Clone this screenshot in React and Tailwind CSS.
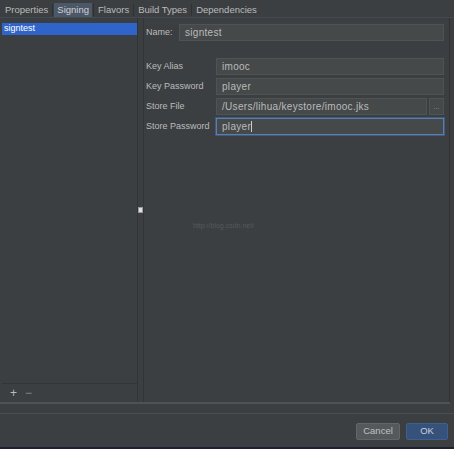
import { useState } from 'react';

const tabs = ['Properties', 'Signing', 'Flavors', 'Build Types', 'Dependencies'];

function Field({ label, value, focused, browse, labelWidth = 'w-[70px]' }) {
    return (
        <div className="flex items-center h-[17px]">
            <span className={`${labelWidth} shrink-0 text-[#bbbbbb]`}>{label}</span>
            <div
                className={`flex-1 h-full flex items-center px-[5px] bg-[#45494a] ${
                    focused ? 'border border-[#5a7fae] shadow-[0_0_0_1px_#3f5b80]' : 'border border-[#4f5354]'
                }`}
            >
                <span className="text-[#bbbbbb] text-[10px] tracking-[0.3px]">{value}</span>
                {focused && <span className="w-px h-[11px] bg-[#cccccc]" />}
            </div>
            {browse && (
                <div className="ml-[2px] w-[15px] h-full flex items-center justify-center bg-[#45494a] border border-[#4f5354] text-[#999999] text-[7px] leading-none">
                    ...
                </div>
            )}
        </div>
    );
}

export default function App() {
    const [active] = useState('Signing');

    return (
        <div
            className="w-[454px] h-[449px] bg-[#3c3f41] flex flex-col text-[9px] overflow-hidden"
            style={{ fontFamily: '"Liberation Sans", Arial, sans-serif' }}
        >
            {/* tab strip */}
            <div className="h-[18px] flex items-stretch pl-[1px] pt-[3px] border-b border-[#434a52]">
                {tabs.map((tab, i) => (
                    <div key={tab} className="flex items-stretch">
                        {i > 0 && <div className="w-px my-[1px] bg-[#2f3133]" />}
                        <div
                            className={`flex items-center px-[3px] mx-[1px] text-[9.5px] ${
                                tab === active ? 'bg-[#4b5869] text-[#d0d0d0]' : 'text-[#bbbbbb]'
                            }`}
                        >
                            {tab}
                        </div>
                    </div>
                ))}
            </div>

            {/* main panel */}
            <div className="h-[386px] mr-[4px] flex border-b-2 border-[#505355]">
                <div className="w-[138px] pl-[2px] pt-[3px] flex flex-col border-r border-[#323436]">
                    <div className="flex-1 flex flex-col border-b border-[#323436]">
                        <div className="h-[12px] mt-[2px] bg-[#2f65ca] text-white flex items-center pl-[2px]">signtest</div>
                    </div>
                    <div className="h-[18px] flex items-center gap-[8px] pl-[8px] text-[#bbbbbb] text-[12px] leading-none">
                        <span>+</span>
                        <span className="text-[#888888]">−</span>
                    </div>
                </div>
                <div className="w-[5px] flex items-center justify-center">
                    <div className="w-[5px] h-[6px] bg-[#e0e0e0] border border-[#999999]" />
                </div>
                <div className="flex-1 flex flex-col border-l border-[#323436] border-r border-r-[#2f3133] pl-[2px] pr-[5px] pt-[6px] relative">
                    <Field label="Name:" value="signtest" labelWidth="w-[33px]" />
                    <div className="h-[17px]" />
                    <div className="flex flex-col gap-[3px]">
                        <Field label="Key Alias" value="imooc" />
                        <Field label="Key Password" value="player" />
                        <Field label="Store File" value="/Users/lihua/keystore/imooc.jks" browse />
                        <Field label="Store Password" value="player" focused />
                    </div>
                    <span className="absolute left-[49px] top-[203px] text-[7px] text-[#55595c]">http://blog.csdn.net/</span>
                </div>
            </div>

            <div className="h-[9px]" />
            <div className="h-px bg-[#4a4d4f]" />

            {/* footer buttons */}
            <div className="flex-1 flex items-start justify-end gap-[6px] pr-[6px] pt-[9px]">
                <button className="w-[44px] h-[17px] bg-[#55595c] border border-[#62666a] text-[#c0c0c0] text-[9.5px] rounded-[2px]">
                    Cancel
                </button>
                <button className="w-[42px] h-[17px] bg-[#36527a] border border-[#3f5f8c] text-[#c8d0dc] text-[9.5px] rounded-[2px]">
                    OK
                </button>
            </div>
            <div className="h-[2px] bg-[#1e2030]" />
        </div>
    );
}
